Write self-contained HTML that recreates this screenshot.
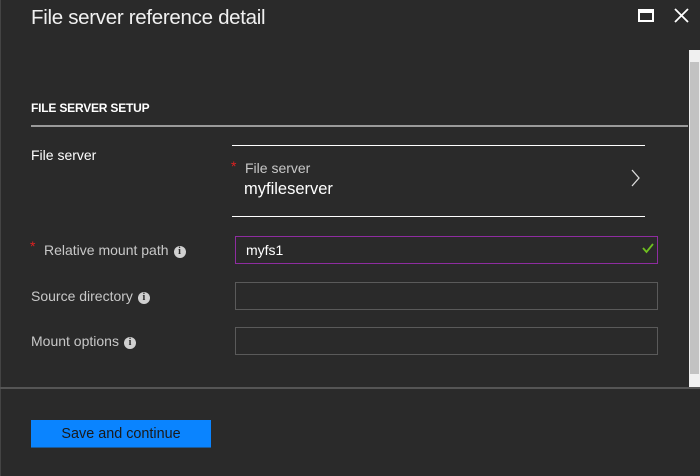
<!DOCTYPE html>
<html><head><style>
*{margin:0;padding:0;box-sizing:border-box}
body{width:700px;height:476px;background:#2a2a2a;font-family:"Liberation Sans",sans-serif;position:relative;overflow:hidden;color:#fff}
.a{position:absolute}
.lbl{font-size:14px;color:#c8c8c8}
.inp{position:absolute;left:235px;width:423px;height:28px;border:1px solid #5a5a5a}
.info{display:inline-block;width:12px;height:12px;border-radius:50%;background:#d0d0d0;color:#2a2a2a;font-size:10px;font-weight:bold;text-align:center;line-height:12px;font-family:"Liberation Serif",serif;vertical-align:1px;margin-left:5px}
</style></head><body>
<div class="a" style="left:0;top:0;width:1px;height:476px;background:#444"></div>
<div class="a" style="left:31px;top:6px;font-size:20.5px;font-weight:300;color:#f0f0f0;letter-spacing:-0.3px">File server reference detail</div>
<div class="a" style="left:638px;top:9px;width:16px;height:13px;border:2px solid #fff;border-top-width:4px"></div>
<svg class="a" style="left:673px;top:7px" width="17" height="17"><path d="M2 2L15 15M15 2L2 15" stroke="#fff" stroke-width="1.8"/></svg>
<div class="a" style="left:689px;top:50px;width:11px;height:338px;background:#f0f0f0"></div>
<div class="a" style="left:690px;top:62px;width:9px;height:312px;background:#c2c2c2"></div>
<div class="a" style="left:31px;top:101px;font-size:12px;font-weight:bold;color:#fff;letter-spacing:-0.2px">FILE SERVER SETUP</div>
<div class="a" style="left:31px;top:125px;width:657px;height:2px;background:#9a9a9a"></div>
<div class="a" style="left:31px;top:147px;font-size:14px;color:#fff">File server</div>
<div class="a" style="left:232px;top:145px;width:413px;height:1px;background:#fff"></div>
<div class="a" style="left:232px;top:216px;width:413px;height:1px;background:#fff"></div>
<div class="a" style="left:231px;top:158px;color:#e02020;font-size:14px">*</div>
<div class="a lbl" style="left:245px;top:160px">File server</div>
<div class="a" style="left:244px;top:180px;font-size:16.5px;color:#fff">myfileserver</div>
<svg class="a" style="left:630px;top:168px" width="12" height="20"><path d="M2 2L9 10L2 18" stroke="#ddd" stroke-width="1.3" fill="none"/></svg>
<div class="a" style="left:30px;top:238px;color:#e02020;font-size:14px">*</div>
<div class="a lbl" style="left:44px;top:242px">Relative mount path<span class="info">i</span></div>
<div class="inp" style="top:236px;border-color:#8e2ca0"></div>
<div class="a" style="left:246px;top:242px;font-size:14px;color:#fff">myfs1</div>
<svg class="a" style="left:641px;top:241px" width="14" height="14"><path d="M2 7L5.5 11L12 3" stroke="#6fbf20" stroke-width="1.8" fill="none"/></svg>
<div class="a lbl" style="left:31px;top:288px">Source directory<span class="info">i</span></div>
<div class="inp" style="top:282px"></div>
<div class="a lbl" style="left:31px;top:333px">Mount options<span class="info">i</span></div>
<div class="inp" style="top:327px"></div>
<div class="a" style="left:0;top:387px;width:700px;height:2px;background:#555"></div>
<div class="a" style="left:31px;top:420px;width:180px;height:28px;background:#0a84ff;border-bottom:1px solid #1a5a9a;color:#1a1a1a;font-size:14.4px;text-align:center;line-height:28px">Save and continue</div>
</body></html>
